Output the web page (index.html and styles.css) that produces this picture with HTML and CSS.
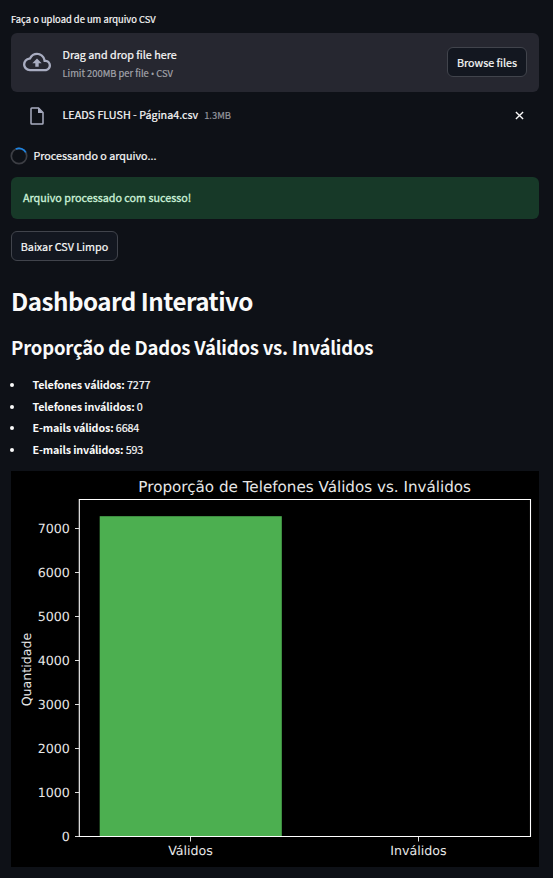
FILE: index.html
```html
<!DOCTYPE html>
<html lang="pt-BR">
<head>
<meta charset="utf-8">
<title>Dashboard Interativo</title>
<link rel="stylesheet" href="styles.css">
</head>
<body>
<main class="page">
  <div class="label"><span>Faça o upload de um arquivo CSV</span></div>
  <section class="dropzone">
    <svg class="cloud" viewBox="0 0 24 24"><path d="M19.35 10.04A7.49 7.49 0 0 0 12 4C9.11 4 6.6 5.64 5.35 8.04A5.994 5.994 0 0 0 0 14c0 3.31 2.69 6 6 6h13c2.76 0 5-2.24 5-5 0-2.64-2.05-4.78-4.65-4.96zM19 18H6c-2.21 0-4-1.79-4-4 0-2.05 1.53-3.76 3.56-3.97l1.07-.11.5-.95A5.469 5.469 0 0 1 12 6c2.62 0 4.88 1.86 5.39 4.43l.3 1.5 1.53.11A2.98 2.98 0 0 1 22 15c0 1.65-1.35 3-3 3zM8 13h2.55v3h2.9v-3H16l-4-4z"/></svg>
    <div class="instructions">
      <div class="drag"><span>Drag and drop file here</span></div>
      <div class="limit"><span>Limit 200MB per file <span class="dot">•</span> CSV</span></div>
    </div>
    <button class="button browse"><span>Browse files</span></button>
  </section>
  <div class="file">
    <svg class="doc" viewBox="0 0 18 18"><path d="M3.8 1h6.7L15 5.5v10.7a.8.8 0 0 1-.8.8H3.8a.8.8 0 0 1-.8-.8V1.800a.8.8 0 0 1 .8-.8z" fill="none" stroke="currentColor" stroke-width="1.5"/><path d="M10 1v5h5z" fill="currentColor"/></svg>
    <span class="filename">LEADS FLUSH - Página4.csv</span>
    <span class="size">1.3MB</span>
    <svg class="close" viewBox="0 0 10 10"><path d="M1 1l8 8M9 1L1 9"/></svg>
  </div>
  <div class="spinner">
    <svg class="ring" viewBox="0 0 18 18"><circle cx="9" cy="9" r="7.700"/><path d="M5.800 2A7.700 7.700 0 0 1 15.800 5.400"/></svg>
    <span class="status">Processando o arquivo...</span>
  </div>
  <div class="success"><span>Arquivo processado com sucesso!</span></div>
  <button class="button download"><span>Baixar CSV Limpo</span></button>
  <h1><span>Dashboard Interativo</span></h1>
  <h2><span>Proporção de Dados Válidos vs. Inválidos</span></h2>
  <ul>
    <li><strong>Telefones válidos:</strong> 7277</li>
    <li><strong>Telefones inválidos:</strong> 0</li>
    <li><strong>E-mails válidos:</strong> 6684</li>
    <li><strong>E-mails inválidos:</strong> 593</li>
  </ul>
  <svg class="chart" viewBox="0 0 528 396">
    <rect width="528" height="396"/>
    <rect class="bar" x="88.700" y="45.200" width="182.100" height="320.300"/>
    <path class="axis" d="M68.300 28.500H519.500V365.500H68.300z"/>
    <path class="ticks" d="M64 365.500h4M64 321.500h4M64 277.500h4M64 233.500h4M64 189.500h4M64 145.500h4M64 101.500h4M64 57.500h4M179.500 366v4.500M407.500 366v4.500"/>
    <text class="title" x="293.700" y="21.300">Proporção de Telefones Válidos vs. Inválidos</text>
    <g class="y-labels">
      <text x="58.800" y="62">7000</text>
      <text x="58.800" y="106">6000</text>
      <text x="58.800" y="150">5000</text>
      <text x="58.800" y="194">4000</text>
      <text x="58.800" y="238">3000</text>
      <text x="58.800" y="282">2000</text>
      <text x="58.800" y="326">1000</text>
      <text x="58.800" y="370">0</text>
    </g>
    <text class="name" x="179.500" y="384">Válidos</text>
    <text class="name" x="407.500" y="384">Inválidos</text>
    <text class="name" transform="translate(19.500 198.500) rotate(-90)">Quantidade</text>
  </svg>
</main>
</body>
</html>
```
FILE: styles.css
```css
* { box-sizing: border-box; }
body {
  margin: 0;
  background: #0e1117;
  color: #fafafa;
  font-family: "Noto Sans CJK SC", "Noto Sans", sans-serif;
  font-size: 10.75px;
  line-height: 18px;
  -webkit-text-stroke: 0.2px;
}
.page { width: 528px; margin-left: 11px; padding-top: 10px; }
.label { height: 23px; font-size: 9.4px; }
.dropzone {
  display: flex;
  align-items: center;
  height: 59px;
  padding: 0 12px;
  background: #262730;
  border-radius: 6px;
}
.cloud { width: 28px; height: 28px; margin: 0 11.500px 2px 0; fill: #a9adc1; }
.instructions { flex: 1; padding-top: 4px; }
.limit { font-size: 9.4px; color: #a3a4ab; }
.dot { font-family: "Noto Sans", sans-serif; font-size: 8.500px; }
.button {
  height: 30px;
  padding: 0;
  background: #131720;
  color: #fafafa;
  border: 1px solid #41444c;
  border-radius: 6px;
  font: inherit;
}
.browse { width: 80px; margin-bottom: 1px; padding-top: 2px; }
.file { display: flex; align-items: center; height: 47px; padding: 0 15px 1px 17px; }
.doc { width: 18px; height: 18px; margin: 1px 17px 0 -.5px; color: #a9adc1; }
.size { flex: 1; margin-left: 6px; font-size: 9.4px; color: #94969d; }
.close { width: 9px; height: 9px; stroke: #fafafa; stroke-width: 1.5; }
.spinner { display: flex; align-items: center; height: 34px; }
.ring { width: 18px; height: 18px; margin: 0 5.2px 1px -.7px; fill: none; stroke: #3c3e44; stroke-width: 1.7; }
.ring path { stroke: #1c83e1; }
.success {
  height: 42px;
  margin-top: 4px;
  padding: 12px;
  background: #173928;
  color: #cdf3da;
  border-radius: 6px;
  -webkit-text-stroke: 0.3px;
}
.download { display: block; width: 107px; margin-top: 12px; padding-top: 2px; }
h1, h2 { margin: 0; font-weight: 700; white-space: nowrap; -webkit-text-stroke: 0; }
h1 { height: 32px; margin-top: 24px; font-size: 24.2px; line-height: 32px; letter-spacing: -.52px; }
h2 { height: 28px; margin-top: 16px; font-size: 18.5px; line-height: 28px; letter-spacing: -.2px; }
ul { margin: 13px 0 10px; padding: 0; line-height: 21.670px; list-style: none; letter-spacing: -.13px; }
li { height: 21.670px; }
li::before {
  content: "";
  display: inline-block;
  width: 4px;
  height: 4px;
  margin: 0 18.500px 2px -1px;
  border-radius: 50%;
  background: #fafafa;
  vertical-align: middle;
}
strong { -webkit-text-stroke: 0; }
.chart {
  display: block;
  width: 528px;
  height: 396px;
  font-family: "DejaVu Sans", sans-serif;
  font-size: 12.640px;
  text-rendering: geometricPrecision;
  -webkit-text-stroke: 0;
}
.chart text { fill: #e8e8e8; text-anchor: middle; }
.chart .title { font-size: 15.170px; }
.chart .y-labels text { text-anchor: end; }
.bar { fill: #4caf50; }
.axis { fill: none; stroke: #fff; stroke-width: 1.1; }
.ticks { stroke: #ddd; }
```
